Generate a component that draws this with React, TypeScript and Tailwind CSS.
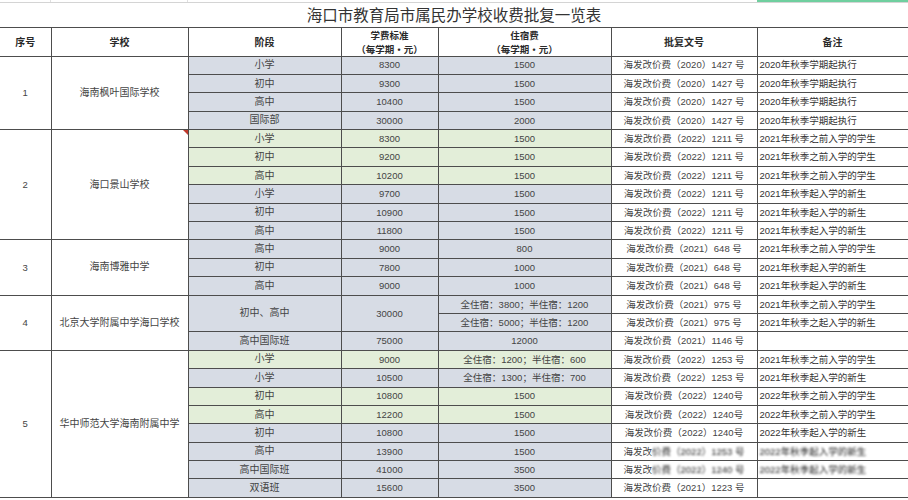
import React from "react"

type Row = {
  stage?: string
  stageSpan?: number
  fee?: string
  dorm: string
  doc: React.ReactNode
  note: React.ReactNode
  green?: boolean
}

type School = { no: string; name: string; rows: Row[] }

const blur = (s: string) => <span className="blur-[1.2px] text-[#222]">{s}</span>

const schools: School[] = [
  {
    no: "1",
    name: "海南枫叶国际学校",
    rows: [
      { stage: "小学", fee: "8300", dorm: "1500", doc: "海发改价费（2020）1427 号", note: "2020年秋季学期起执行" },
      { stage: "初中", fee: "9300", dorm: "1500", doc: "海发改价费（2020）1427 号", note: "2020年秋季学期起执行" },
      { stage: "高中", fee: "10400", dorm: "1500", doc: "海发改价费（2020）1427 号", note: "2020年秋季学期起执行" },
      { stage: "国际部", fee: "30000", dorm: "2000", doc: "海发改价费（2020）1427 号", note: "2020年秋季学期起执行" },
    ],
  },
  {
    no: "2",
    name: "海口景山学校",
    rows: [
      { stage: "小学", fee: "8300", dorm: "1500", doc: "海发改价费（2022）1211 号", note: "2021年秋季之前入学的学生", green: true },
      { stage: "初中", fee: "9200", dorm: "1500", doc: "海发改价费（2022）1211 号", note: "2021年秋季之前入学的学生", green: true },
      { stage: "高中", fee: "10200", dorm: "1500", doc: "海发改价费（2022）1211 号", note: "2021年秋季之前入学的学生", green: true },
      { stage: "小学", fee: "9700", dorm: "1500", doc: "海发改价费（2022）1211 号", note: "2021年秋季起入学的新生" },
      { stage: "初中", fee: "10900", dorm: "1500", doc: "海发改价费（2022）1211 号", note: "2021年秋季起入学的新生" },
      { stage: "高中", fee: "11800", dorm: "1500", doc: "海发改价费（2022）1211 号", note: "2021年秋季起入学的新生" },
    ],
  },
  {
    no: "3",
    name: "海南博雅中学",
    rows: [
      { stage: "高中", fee: "9000", dorm: "800", doc: "海发改价费（2021）648 号", note: "2021年秋季之前入学的学生" },
      { stage: "初中", fee: "7800", dorm: "1000", doc: "海发改价费（2021）648 号", note: "2021年秋季起入学的新生" },
      { stage: "高中", fee: "9000", dorm: "1000", doc: "海发改价费（2021）648 号", note: "2021年秋季起入学的新生" },
    ],
  },
  {
    no: "4",
    name: "北京大学附属中学海口学校",
    rows: [
      { stage: "初中、高中", stageSpan: 2, fee: "30000", dorm: "全住宿：3800；半住宿：1200", doc: "海发改价费（2021）975 号", note: "2021年秋季之前入学的学生" },
      { dorm: "全住宿：5000；半住宿：1200", doc: "海发改价费（2021）975 号", note: "2021年秋季之起入学的新生" },
      { stage: "高中国际班", fee: "75000", dorm: "12000", doc: "海发改价费（2021）1146 号", note: "" },
    ],
  },
  {
    no: "5",
    name: "华中师范大学海南附属中学",
    rows: [
      { stage: "小学", fee: "9000", dorm: "全住宿：1200；半住宿：600", doc: "海发改价费（2022）1253 号", note: "2021年秋季之前入学的学生", green: true },
      { stage: "小学", fee: "10500", dorm: "全住宿：1300；半住宿：700", doc: "海发改价费（2022）1253 号", note: "2021年秋季起入学的新生" },
      { stage: "初中", fee: "10800", dorm: "1500", doc: "海发改价费（2022）1240号", note: "2022年秋季之前入学的学生", green: true },
      { stage: "高中", fee: "12200", dorm: "1500", doc: "海发改价费（2022）1240号", note: "2022年秋季之前入学的学生", green: true },
      { stage: "初中", fee: "10800", dorm: "1500", doc: "海发改价费（2022）1240号", note: "2022年秋季起入学的新生" },
      {
        stage: "高中",
        fee: "13900",
        dorm: "1500",
        doc: <>海发改{blur("价费（2022）1253 号")}</>,
        note: blur("2022年秋季起入学的新生"),
      },
      {
        stage: "高中国际班",
        fee: "41000",
        dorm: "3500",
        doc: <>海发改{blur("价费（2022）1240 号")}</>,
        note: blur("2022年秋季起入学的新生"),
      },
      { stage: "双语班", fee: "15600", dorm: "3500", doc: "海发改价费（2021）1223 号", note: "" },
    ],
  },
]

const line = "border border-[#4d4d4d]"

function TwoLine({ top }: { top: string }) {
  return (
    <div className="flex flex-col items-center text-[9.5px] leading-[14px]">
      <span>{top}</span>
      <span>（每学期·元）</span>
    </div>
  )
}

export default function App() {
  return (
    <div className="w-[908px] h-[500px] overflow-hidden bg-white font-['Liberation_Sans','Noto_Sans_CJK_SC',sans-serif] text-[#444]">
      <div className="flex h-[3px] border-b border-[#d4d4d4]">
        <div className="w-[51px] border-r border-[#e0e0e0]" />
        <div className="w-[137px] border-r border-[#e0e0e0]" />
        <div className="flex-1" />
        <div className="w-[151px] bg-[#6fcf9f]" />
      </div>
      <table className="table-fixed border-collapse w-[908px]">
        <colgroup>
          <col className="w-[51px]" />
          <col className="w-[137px]" />
          <col className="w-[153px]" />
          <col className="w-[97px]" />
          <col className="w-[173px]" />
          <col className="w-[146px]" />
          <col className="w-[151px]" />
        </colgroup>
        <tbody>
          <tr className="h-[24px]">
            <td colSpan={7} className="p-0 text-center text-[15.5px] leading-none text-[#333] font-['Noto_Sans_CJK_SC',sans-serif]">
              海口市教育局市属民办学校收费批复一览表
            </td>
          </tr>
          <tr className="h-[28px] text-[10px] font-bold text-[#2a2a2a] leading-none font-['Noto_Sans_CJK_SC',sans-serif]">
            <td className={`${line} border-l-0 text-center p-0`}>序号</td>
            <td className={`${line} text-center p-0`}>学校</td>
            <td className={`${line} text-center p-0`}>阶段</td>
            <td className={`${line} text-center p-0`}>
              <TwoLine top="学费标准" />
            </td>
            <td className={`${line} text-center p-0`}>
              <TwoLine top="住宿费" />
            </td>
            <td className={`${line} text-center p-0`}>批复文号</td>
            <td className={`${line} text-center p-0`}>备注</td>
          </tr>
          {schools.map((school, si) =>
            school.rows.map((row, ri) => {
              const bg = row.green ? "bg-[#e3eed9]" : "bg-[#d7dce5]"
              return (
                <tr key={`${si}-${ri}`} className="h-[18.4px] text-[9.5px] leading-none">
                  {ri === 0 && (
                    <>
                      <td rowSpan={school.rows.length} className={`${line} border-l-0 text-center p-0`}>
                        {school.no}
                      </td>
                      <td rowSpan={school.rows.length} className={`${line} relative text-center p-0 text-[10px]`}>
                        {school.name}
                        {si === 1 && (
                          <span className="absolute top-0 right-0 border-t-[5px] border-l-[5px] border-t-[#c0392b] border-l-transparent" />
                        )}
                      </td>
                    </>
                  )}
                  {row.stage !== undefined && (
                    <td rowSpan={row.stageSpan} className={`${line} ${bg} text-center p-0 text-[10px]`}>
                      {row.stage}
                    </td>
                  )}
                  {row.fee !== undefined && (
                    <td rowSpan={row.stageSpan} className={`${line} ${bg} text-center p-0`}>
                      {row.fee}
                    </td>
                  )}
                  <td className={`${line} ${bg} text-center p-0 whitespace-nowrap`}>{row.dorm}</td>
                  <td className={`${line} text-center p-0 whitespace-nowrap`}>{row.doc}</td>
                  <td className={`${line} text-left pl-[2px] p-0 whitespace-nowrap text-[#333]`}>{row.note}</td>
                </tr>
              )
            })
          )}
        </tbody>
      </table>
    </div>
  )
}
